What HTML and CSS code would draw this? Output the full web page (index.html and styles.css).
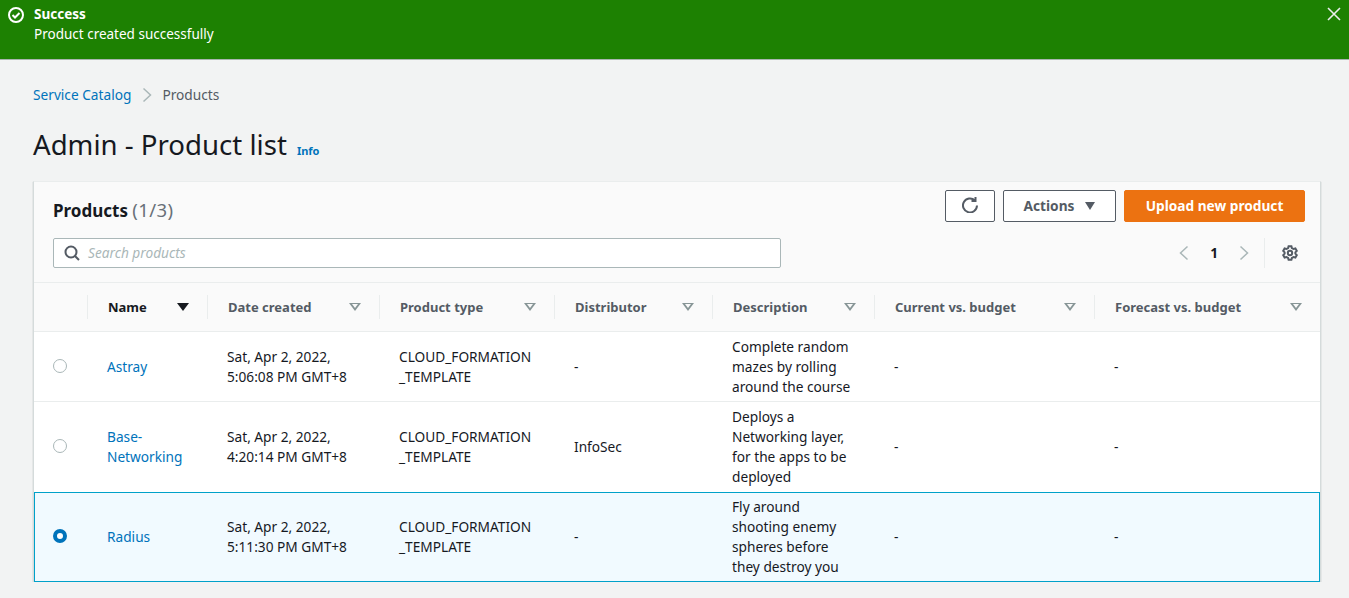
FILE: index.html
```html
<!DOCTYPE html>
<html lang="en">
<head>
    <meta charset="UTF-8">
    <meta name="viewport" content="width=device-width, initial-scale=1.0">
    <title>Admin - Product list</title>
    <link rel="stylesheet" href="styles.css">
</head>
<body>
    <div class="flash">
        <svg class="flash-icon" width="16" height="16" viewBox="0 0 16 16"><circle cx="8" cy="8" r="7"/><path d="M4.5 8l2.5 2.5 4.5-4.5"/></svg>
        <div class="flash-text">
            <div class="flash-title">Success</div>
            <div>Product created successfully</div>
        </div>
        <svg class="flash-close" width="14" height="14" viewBox="0 0 14 14"><path d="M1 1l12 12M13 1L1 13"/></svg>
    </div>
    <main class="content">
        <nav class="crumbs">
            <a href="#">Service Catalog</a>
            <svg class="crumb-sep" width="16" height="16" viewBox="0 0 16 16"><path d="M4.5 1.5l7 6.5-7 6.5"/></svg>
            <span>Products</span>
        </nav>
        <div class="page-title">
            <h1>Admin - Product list</h1>
            <a href="#" class="info">Info</a>
        </div>
        <section class="card">
            <div class="card-head">
                <div class="head-row">
                    <h2>Products <span class="count">(1/3)</span></h2>
                    <div class="actions">
                        <button class="btn btn-icon"><svg class="ico" width="16" height="16" viewBox="0 0 16 16"><path d="M15 8.5a7 7 0 1 1-2.2-5.2"/><path d="M13.5 0v4H9.5"/></svg></button>
                        <button class="btn btn-actions">Actions <span class="caret"></span></button>
                        <button class="btn btn-primary">Upload new product</button>
                    </div>
                </div>
                <div class="tools-row">
                    <div class="search">
                        <svg class="ico" width="16" height="16" viewBox="0 0 16 16"><circle cx="7" cy="7" r="5.5"/><path d="M10.7 10.7L15 15"/></svg>
                        <span>Search products</span>
                    </div>
                    <div class="pager">
                        <svg class="ico-muted" width="16" height="16" viewBox="0 0 16 16"><path d="M11.5 1.5L4.5 8l7 6.5"/></svg>
                        <b>1</b>
                        <svg class="ico-muted" width="16" height="16" viewBox="0 0 16 16"><path d="M4.5 1.5l7 6.5-7 6.5"/></svg>
                        <span class="pager-sep"></span>
                        <svg class="ico" width="16" height="16" viewBox="0 0 16 16"><circle cx="8" cy="8" r="2.2"/><path d="M6.6 1.2h2.8l.5 1.9 1.6.9 1.9-.5 1.4 2.4-1.4 1.4v1.4l1.4 1.4-1.4 2.4-1.9-.5-1.6.9-.5 1.9H6.6l-.5-1.9-1.6-.9-1.9.5-1.4-2.4 1.4-1.4V7.3L1.2 5.9l1.4-2.4 1.9.5 1.6-.9z"/></svg>
                    </div>
                </div>
            </div>
            <table class="products">
                <colgroup>
                    <col class="c-sel"><col class="c-name"><col class="c-date"><col class="c-type"><col class="c-dist"><col class="c-desc"><col class="c-cur"><col>
                </colgroup>
                <thead>
                    <tr>
                        <th></th>
                        <th class="sorted"><div class="th-in">Name <span class="sort-on"></span></div></th>
                        <th><div class="th-in">Date created <span class="sort"></span></div></th>
                        <th><div class="th-in">Product type <span class="sort"></span></div></th>
                        <th><div class="th-in">Distributor <span class="sort"></span></div></th>
                        <th><div class="th-in">Description <span class="sort"></span></div></th>
                        <th><div class="th-in">Current vs. budget <span class="sort"></span></div></th>
                        <th><div class="th-in">Forecast vs. budget <span class="sort"></span></div></th>
                    </tr>
                </thead>
                <tbody>
                    <tr class="row-1">
                        <td><span class="radio"></span></td>
                        <td><a href="#">Astray</a></td>
                        <td>Sat, Apr 2, 2022,<br>5:06:08 PM GMT+8</td>
                        <td>CLOUD_FORMATION<br>_TEMPLATE</td>
                        <td>-</td>
                        <td>Complete random<br>mazes by rolling<br>around the course</td>
                        <td>-</td>
                        <td>-</td>
                    </tr>
                    <tr class="row-2">
                        <td><span class="radio"></span></td>
                        <td><a href="#">Base-<br>Networking</a></td>
                        <td>Sat, Apr 2, 2022,<br>4:20:14 PM GMT+8</td>
                        <td>CLOUD_FORMATION<br>_TEMPLATE</td>
                        <td>InfoSec</td>
                        <td>Deploys a<br>Networking layer,<br>for the apps to be<br>deployed</td>
                        <td>-</td>
                        <td>-</td>
                    </tr>
                    <tr class="row-3 selected">
                        <td><span class="radio radio-on"></span></td>
                        <td><a href="#">Radius</a></td>
                        <td>Sat, Apr 2, 2022,<br>5:11:30 PM GMT+8</td>
                        <td>CLOUD_FORMATION<br>_TEMPLATE</td>
                        <td>-</td>
                        <td>Fly around<br>shooting enemy<br>spheres before<br>they destroy you</td>
                        <td>-</td>
                        <td>-</td>
                    </tr>
                </tbody>
            </table>
        </section>
    </main>
</body>
</html>
```

FILE: styles.css
```css
* {
    box-sizing: border-box;
}

body {
    margin: 0;
    background-color: #f2f3f3;
    color: #16191f;
    font-family: "Noto Sans", sans-serif;
    font-size: 13.7px;
    line-height: 20px;
    overflow: hidden;
}

a {
    color: #0073bb;
    text-decoration: none;
}

svg {
    fill: none;
    stroke-width: 2;
}

.flash {
    display: flex;
    height: 60px;
    padding: 4px 8px 0 8px;
    background-color: #1d8102;
    border-bottom: 1px solid #a9b5b0;
    color: #fff;
    font-size: 13.5px;
}

.flash-icon {
    margin-top: 3px;
    stroke: #fff;
}

.flash-text {
    flex: 1;
    margin-left: 10px;
}

.flash-title {
    font-weight: 700;
}

.flash-close {
    margin-top: 3px;
    stroke: #eaeded;
    stroke-width: 1.6;
}

.content {
    padding: 25px 28px 0 33px;
}

.crumbs {
    display: flex;
    align-items: center;
    gap: 8px;
    color: #545b64;
}

.crumb-sep {
    margin-right: -1px;
    stroke: #aab7b8;
    stroke-width: 1.5;
}

.page-title {
    display: flex;
    align-items: baseline;
    gap: 10px;
    margin-top: 19px;
}

h1 {
    margin: 0;
    font-size: 27.6px;
    font-weight: 400;
    line-height: 40px;
}

.info {
    font-size: 11px;
    font-weight: 700;
}

.card {
    margin-top: 17px;
    background-color: #fff;
    border-left: 1px solid #d5dbdb;
    border-right: 1px solid #d5dbdb;
    border-top: 1px solid #eaeded;
    box-shadow: 0 1px 1px rgba(0, 28, 36, 0.3);
}

.card-head {
    height: 101px;
    padding: 8px 15px 0 19px;
    background-color: #fafafa;
    border-bottom: 1px solid #eaeded;
}

.head-row {
    display: flex;
    justify-content: space-between;
}

h2 {
    margin: 8px 0 0;
    font-size: 17px;
    font-weight: 700;
    line-height: 24px;
}

.count {
    color: #687078;
    font-size: 18.5px;
    font-weight: 400;
    letter-spacing: 0.4px;
}

.actions {
    display: flex;
    gap: 8px;
}

.btn {
    height: 32px;
    border: 1px solid #545b64;
    border-radius: 2px;
    background-color: #fff;
    color: #545b64;
    font-family: inherit;
    font-size: 13.7px;
    font-weight: 700;
    padding: 0 0 2px;
}

.btn-icon {
    display: flex;
    align-items: center;
    justify-content: center;
    width: 50px;
}

.btn-actions {
    display: flex;
    align-items: center;
    justify-content: center;
    gap: 11px;
    width: 113px;
}

.caret {
    border-left: 5px solid transparent;
    border-right: 5px solid transparent;
    border-top: 8px solid #545b64;
    margin-top: 2px;
}

.btn-primary {
    width: 181px;
    background-color: #ec7211;
    border-color: #ec7211;
    color: #fff;
}

.ico {
    stroke: #545b64;
}

.ico-muted {
    stroke: #aab7b8;
    stroke-width: 1.5;
}

.tools-row {
    display: flex;
    justify-content: space-between;
    margin-top: 15px;
}

.search {
    display: flex;
    align-items: center;
    gap: 8px;
    width: 728px;
    height: 30px;
    padding: 0 0 1px 10px;
    background-color: #fff;
    border: 1px solid #aab7b8;
    border-radius: 2px;
    color: #aab7b8;
    font-style: italic;
}

.pager {
    display: flex;
    align-items: center;
    height: 29px;
    gap: 18px;
    margin-right: 7px;
}

.pager-sep {
    width: 1px;
    height: 30px;
    margin: 0 -1px 0 -6px;
    background-color: #eaeded;
}

.products {
    width: 100%;
    border-collapse: collapse;
    table-layout: fixed;
}

.c-sel { width: 53px; }
.c-name { width: 120px; }
.c-date { width: 172px; }
.c-type { width: 175px; }
.c-dist { width: 158px; }
.c-desc { width: 162px; }
.c-cur { width: 220px; }

thead tr {
    height: 48px;
    background-color: #fafafa;
    border-bottom: 1px solid #eaeded;
}

th {
    padding: 0;
    color: #545b64;
    font-size: 13px;
    font-weight: 700;
    text-align: left;
}

th.sorted {
    color: #16191f;
}

.th-in {
    display: flex;
    align-items: center;
    justify-content: space-between;
    height: 24px;
    padding: 0 18px 0 20px;
    border-left: 1px solid #eaeded;
}

.sort,
.sort-on {
    position: relative;
    border-left: 6px solid transparent;
    border-right: 6px solid transparent;
    border-top: 8px solid #879596;
}

.sort-on {
    border-top-color: #16191f;
}

.sort::after {
    content: "";
    position: absolute;
    left: -3px;
    top: -7px;
    border-left: 3px solid transparent;
    border-right: 3px solid transparent;
    border-top: 4px solid #fafafa;
}

td {
    padding: 5px 20px 4px;
    vertical-align: middle;
}

td:first-child {
    padding: 0 0 0 19px;
}

tbody tr {
    border-bottom: 1px solid #eaeded;
}

.row-1 { height: 70px; }
.row-2 { height: 91px; }
.row-3 { height: 90px; }

.row-3 td {
    padding-top: 4px;
}

.row-2 td:first-child,
.row-3 td:first-child {
    padding: 0 0 2px 19px;
}

tbody tr.selected {
    background-color: #f1faff;
    outline: 1px solid #00a1c9;
    outline-offset: -1px;
    border-bottom: 0;
}

.radio {
    display: block;
    width: 14px;
    height: 14px;
    background-color: #fff;
    border: 1px solid #aab7b8;
    border-radius: 50%;
}

.radio-on {
    border: 4px solid #0073bb;
}
```
